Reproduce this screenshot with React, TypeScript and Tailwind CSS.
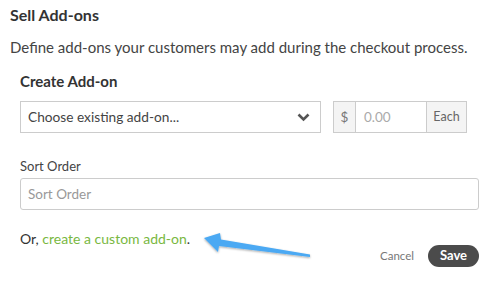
import React from 'react';

const Arrow = () => (
  <svg className="absolute left-[200px] top-[228px]" width="120" height="36" viewBox="200 228 120 36">
    <defs>
      <filter id="sh" x="-10%" y="-30%" width="120%" height="160%">
        <feDropShadow dx="0" dy="1" stdDeviation="1" floodColor="#000" floodOpacity="0.35" />
      </filter>
    </defs>
    <polygon
      points="204,238 220,233 221,239.5 310,254.5 310,257 219,246 218,252"
      fill="#4ba9f3"
      filter="url(#sh)"
    />
  </svg>
);

export default function App() {
  return (
    <div className="relative w-[495px] h-[289px] bg-white text-[#333] font-['Lato',sans-serif] overflow-hidden">
      <div className="px-[10px] pt-[5px]">
        <h2 className="text-[16px] font-bold leading-[20px]">Sell Add-ons</h2>
        <p className="mt-[13px] text-[15px] leading-[18px] text-[#444]">
          Define add-ons your customers may add during the checkout process.
        </p>
      </div>
      <div className="pl-[20px] pr-[16px]">
        <h3 className="mt-[15px] text-[15px] font-bold leading-[20px]">Create Add-on</h3>
        <div className="mt-[10px] flex items-center">
          <div className="flex h-[32px] w-[301px] items-center justify-between border border-[#ccc] bg-white pl-[7px] pr-[10px] text-[13.7px] text-[#444]">
            <span>Choose existing add-on...</span>
            <svg width="13" height="9" viewBox="0 0 13 9">
              <path d="M1.5 1.5 L6.5 6.5 L11.5 1.5" stroke="#555" strokeWidth="2.6" fill="none" />
            </svg>
          </div>
          <div className="ml-[12px] flex h-[32px] w-[134px] border border-[#ccc] text-[13.5px]">
            <div className="flex w-[22px] items-center justify-center border-r border-[#ccc] bg-[#f4f4f4] text-[#777]">$</div>
            <div className="flex w-[70px] items-center pl-[8px] text-[#aaa]">0.00</div>
            <div className="flex flex-1 items-center justify-center border-l border-[#ccc] bg-[#f4f4f4] text-[12.5px] text-[#666]">Each</div>
          </div>
        </div>
        <label className="mt-[25px] block text-[13px] leading-[16px] text-[#444]">Sort Order</label>
        <div className="mt-[4px] flex h-[32px] w-[459px] items-center rounded-[3px] border border-[#ccc] pl-[7px] text-[13.5px] text-[#999]">
          Sort Order
        </div>
        <p className="mt-[20px] text-[14px] leading-[18px] text-[#333]">
          Or, <span className="text-[#79b83f]">create a custom add-on</span>.
        </p>
        <div className="-mt-[3px] flex items-center justify-end gap-[14px]">
          <span className="text-[11.5px] text-[#777]">Cancel</span>
          <button className="h-[22px] w-[51px] rounded-full bg-[#4b4b4b] text-[13px] font-bold text-white">Save</button>
        </div>
      </div>
      <Arrow />
    </div>
  );
}
